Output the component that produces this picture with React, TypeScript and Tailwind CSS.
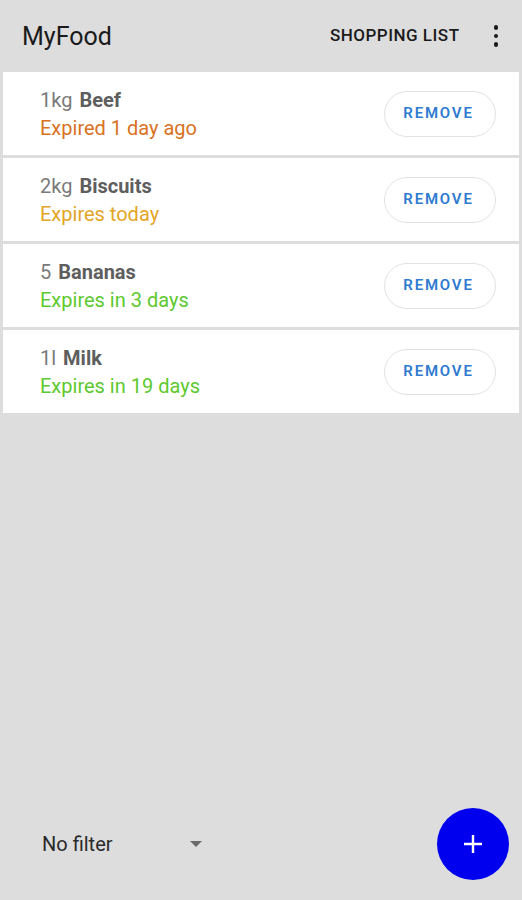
import React from 'react';

interface FoodItem {
  qty: string;
  name: string;
  status: string;
  color: string;
}

const items: FoodItem[] = [
  { qty: '1kg', name: 'Beef', status: 'Expired 1 day ago', color: 'text-[#d8721f]' },
  { qty: '2kg', name: 'Biscuits', status: 'Expires today', color: 'text-[#e3a526]' },
  { qty: '5', name: 'Bananas', status: 'Expires in 3 days', color: 'text-[#5dc92e]' },
  { qty: '1l', name: 'Milk', status: 'Expires in 19 days', color: 'text-[#5dc92e]' },
];

const FoodRow: React.FC<{ item: FoodItem }> = ({ item }) => (
  <div className="mx-[3px] flex h-[83px] items-center justify-between bg-white pl-[37px] pr-[23px]">
    <div className="flex flex-col text-[20px] leading-[28px]">
      <div>
        <span className="text-[#7a7a7a]">{item.qty}</span>
        <span className="ml-[7px] font-bold text-[#5e5e5e]">{item.name}</span>
      </div>
      <div className={item.color}>{item.status}</div>
    </div>
    <button className="h-[46px] w-[112px] rounded-full border border-[#e2e2e2] bg-white pr-[3px] text-[15px] font-semibold tracking-[1.8px] text-[#2f7bd0]">
      REMOVE
    </button>
  </div>
);

export default function App() {
  return (
    <div className="flex min-h-[900px] flex-col bg-[#dddddd] font-['Roboto',sans-serif]">
      {/* toolbar */}
      <div className="flex h-[72px] items-center pl-[22px] pr-[24px]">
        <div className="flex-1 pt-[2px] text-[25px] text-[#1a1a1a]">MyFood</div>
        <div className="text-[17px] font-medium tracking-[0.5px] text-[#1a1a1a]">SHOPPING LIST</div>
        <div className="ml-[34px] flex flex-col items-center gap-[4px]">
          <span className="h-[4.5px] w-[4.5px] rounded-full bg-[#1a1a1a]" />
          <span className="h-[4.5px] w-[4.5px] rounded-full bg-[#1a1a1a]" />
          <span className="h-[4.5px] w-[4.5px] rounded-full bg-[#1a1a1a]" />
        </div>
      </div>

      <div className="flex flex-col gap-[3px]">
        {items.map((it) => (
          <FoodRow key={it.name} item={it} />
        ))}
      </div>

      <div className="flex-1" />

      {/* bottom bar */}
      <div className="flex items-center justify-between pb-[20px] pl-[42px] pr-[13px]">
        <div className="flex w-[160px] items-center justify-between">
          <span className="text-[20px] text-[#2a2a2a]">No filter</span>
          <svg width="12" height="6" viewBox="0 0 12 6">
            <path d="M0 0 L12 0 L6 6 Z" fill="#6b6b6b" />
          </svg>
        </div>
        <button className="flex h-[72px] w-[72px] items-center justify-center rounded-full bg-[#0000ee]">
          <svg width="20" height="20" viewBox="0 0 20 20">
            <path d="M10 1 V19 M1 10 H19" stroke="white" strokeWidth="2.4" />
          </svg>
        </button>
      </div>
    </div>
  );
}
